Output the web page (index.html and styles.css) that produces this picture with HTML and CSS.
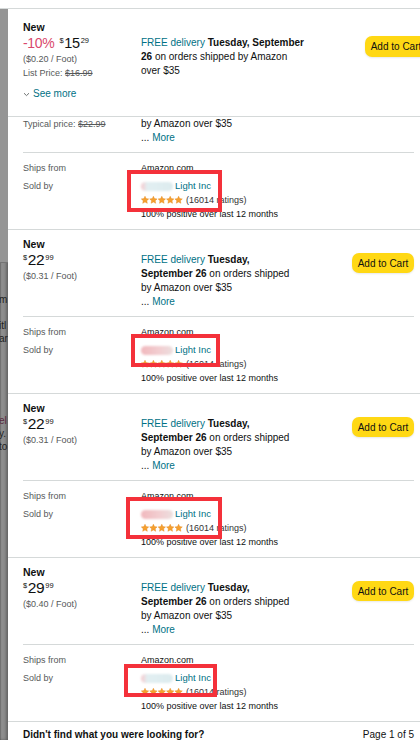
FILE: index.html
```html
<!DOCTYPE html>
<html lang="en">
<head>
  <meta charset="UTF-8" />
  <meta name="viewport" content="width=device-width, initial-scale=1.0" />
  <title>Other sellers</title>
  <link rel="stylesheet" href="styles.css">
</head>
<body>
  <div class="topbar"></div>

  <div class="layout">
    <!-- page behind the side sheet -->
    <div class="backdrop">
      <div class="bd-top"></div>
      <p class="bd-text bd-first">m<br><br>itl<br>ar</p>
      <p class="bd-text bd-second"><span class="bd-link">el</span><br>y.<br>to</p>
    </div>

    <div class="panel">
      <!-- pinned offer -->
      <section class="pinned">
        <div class="col-price">
          <div class="cond">New</div>
          <div class="price">
            <span class="saving">-10%</span>
            <span class="sym">$</span><span class="whole whole-sm">15</span><span class="sym">29</span>
          </div>
          <div class="unit">($0.20 / Foot)</div>
          <div class="unit">List Price: <s>$16.99</s></div>
          <div class="see-more">
            <svg width="7" height="5" viewBox="0 0 7 5"><path d="M1 1.2 L3.5 3.6 L6 1.2" fill="none" stroke="#6f7373" stroke-width="1"/></svg>
            <span class="link">See more</span>
          </div>
        </div>
        <div class="col-ship pinned-ship">
          <span class="link">FREE delivery</span> <b>Tuesday, September</b><br>
          <b>26</b> on orders shipped by Amazon<br>
          over $35
        </div>
        <div class="col-btn">
          <button class="cart pinned-cart">Add to Cart</button>
        </div>
      </section>

      <div class="scroll">
        <div class="list">
          <!-- offer partly scrolled out of view -->
          <section class="offer offer-cut">
            <div class="offer-top">
              <div class="col-price">
                <div class="unit">($0.26 / Foot)</div>
                <div class="unit">Typical price: <s>$22.99</s></div>
              </div>
              <div class="col-ship">
                <b>September 26</b> on orders shipped<br>
                by Amazon over $35<br>
                ... <span class="link">More</span>
              </div>
              <div class="col-btn"></div>
            </div>
            <div class="seller">
              <div class="lbl">Ships from</div>
              <div class="val">Amazon.com</div>
              <div class="lbl">Sold by</div>
              <div class="val seller-info">
                <div class="name"><span class="blur blur-cyan"></span><span class="link">Light Inc</span></div>
                <div class="rating">
                  <svg class="stars" width="42" height="8" viewBox="0 0 42 8"><use href="#s" x="0"/><use href="#s" x="8.4"/><use href="#s" x="16.8"/><use href="#s" x="25.2"/><use href="#s" x="33.6"/></svg>
                  (16014 ratings)
                </div>
                <div>100% positive over last 12 months</div>
                <div class="mark mark-1"></div>
              </div>
            </div>
          </section>

          <section class="offer">
            <div class="offer-top">
              <div class="col-price">
                <div class="cond">New</div>
                <div class="price"><span class="sym">$</span><span class="whole">22</span><span class="sym">99</span></div>
                <div class="unit">($0.31 / Foot)</div>
              </div>
              <div class="col-ship">
                <span class="link">FREE delivery</span> <b>Tuesday,</b><br>
                <b>September 26</b> on orders shipped<br>
                by Amazon over $35<br>
                ... <span class="link">More</span>
              </div>
              <div class="col-btn"><button class="cart">Add to Cart</button></div>
            </div>
            <div class="seller">
              <div class="lbl">Ships from</div>
              <div class="val">Amazon.com</div>
              <div class="lbl">Sold by</div>
              <div class="val seller-info">
                <div class="name"><span class="blur blur-pink"></span><span class="link">Light Inc</span></div>
                <div class="rating">
                  <svg class="stars" width="42" height="8" viewBox="0 0 42 8"><use href="#s" x="0"/><use href="#s" x="8.4"/><use href="#s" x="16.8"/><use href="#s" x="25.2"/><use href="#s" x="33.6"/></svg>
                  (16014 ratings)
                </div>
                <div>100% positive over last 12 months</div>
                <div class="mark mark-2"></div>
              </div>
            </div>
          </section>

          <section class="offer">
            <div class="offer-top">
              <div class="col-price">
                <div class="cond">New</div>
                <div class="price"><span class="sym">$</span><span class="whole">22</span><span class="sym">99</span></div>
                <div class="unit">($0.31 / Foot)</div>
              </div>
              <div class="col-ship">
                <span class="link">FREE delivery</span> <b>Tuesday,</b><br>
                <b>September 26</b> on orders shipped<br>
                by Amazon over $35<br>
                ... <span class="link">More</span>
              </div>
              <div class="col-btn"><button class="cart">Add to Cart</button></div>
            </div>
            <div class="seller">
              <div class="lbl">Ships from</div>
              <div class="val">Amazon.com</div>
              <div class="lbl">Sold by</div>
              <div class="val seller-info">
                <div class="name"><span class="blur blur-pink"></span><span class="link">Light Inc</span></div>
                <div class="rating">
                  <svg class="stars" width="42" height="8" viewBox="0 0 42 8"><use href="#s" x="0"/><use href="#s" x="8.4"/><use href="#s" x="16.8"/><use href="#s" x="25.2"/><use href="#s" x="33.6"/></svg>
                  (16014 ratings)
                </div>
                <div>100% positive over last 12 months</div>
                <div class="mark mark-3"></div>
              </div>
            </div>
          </section>

          <section class="offer">
            <div class="offer-top">
              <div class="col-price">
                <div class="cond">New</div>
                <div class="price"><span class="sym">$</span><span class="whole">29</span><span class="sym">99</span></div>
                <div class="unit">($0.40 / Foot)</div>
              </div>
              <div class="col-ship">
                <span class="link">FREE delivery</span> <b>Tuesday,</b><br>
                <b>September 26</b> on orders shipped<br>
                by Amazon over $35<br>
                ... <span class="link">More</span>
              </div>
              <div class="col-btn"><button class="cart">Add to Cart</button></div>
            </div>
            <div class="seller">
              <div class="lbl">Ships from</div>
              <div class="val">Amazon.com</div>
              <div class="lbl">Sold by</div>
              <div class="val seller-info">
                <div class="name"><span class="blur blur-cyan"></span><span class="link">Light Inc</span></div>
                <div class="rating">
                  <svg class="stars" width="42" height="8" viewBox="0 0 42 8"><use href="#s" x="0"/><use href="#s" x="8.4"/><use href="#s" x="16.8"/><use href="#s" x="25.2"/><use href="#s" x="33.6"/></svg>
                  (16014 ratings)
                </div>
                <div>100% positive over last 12 months</div>
                <div class="mark mark-4"></div>
              </div>
            </div>
          </section>

          <div class="list-foot">
            <b>Didn't find what you were looking for?</b>
            <span>Page 1 of 5</span>
          </div>
        </div>
      </div>
    </div>
  </div>

  <svg width="0" height="0" class="defs">
    <defs>
      <path id="s" d="M4 0.2 L5.1 2.6 L7.7 2.9 L5.8 4.7 L6.3 7.3 L4 6 L1.7 7.3 L2.2 4.7 L0.3 2.9 L2.9 2.6 Z" fill="#f5a030" stroke="#e4861a" stroke-width="0.4"/>
    </defs>
  </svg>
</body>
</html>
```

FILE: styles.css
```css
body { margin: 0; font-family: "Liberation Sans", Arial, sans-serif; font-size: 10px; color: #0f1111; background: #fff; }
.defs { position: absolute; }

.topbar { height: 8px; border-bottom: 1px solid #d5d9d9; }
.layout { display: flex; height: 731px; }

.backdrop { width: 8px; flex: none; background: #8e8e8e; overflow: hidden; box-shadow: inset -2px 0 3px rgba(0,0,0,0.3), inset 1px 0 1px rgba(0,0,0,0.2); }
.bd-top { height: 253px; border-bottom: 1px solid #747474; background: #959595; }
.bd-text { margin: 0; font-size: 10px; line-height: 13px; color: #222; white-space: nowrap; margin-left: -1px; }
.bd-first { margin-top: 30px; }
.bd-second { margin-top: 69px; }
.bd-link { color: #5a2a40; }

.panel { flex: 1; min-width: 0; overflow: hidden; display: flex; flex-direction: column; }

.link { color: #007185; }
b { font-weight: bold; }

.pinned { flex: none; height: 108px; box-sizing: border-box; border-bottom: 1px solid #d5d9d9; padding: 11px 0 0 15px; display: grid; grid-template-columns: 118px 224px 62px; align-items: start; }
.pinned-ship { line-height: 14.5px; }

.cond { font-weight: bold; font-size: 10.5px; line-height: 14px; }
.price { display: flex; align-items: flex-start; line-height: 18px; height: 18px; }
.sym { font-size: 7.5px; line-height: 13px; }
.whole { font-size: 15.5px; letter-spacing: -0.3px; margin: 0 1px 0 0.5px; }
.whole-sm { font-size: 14.5px; }
.saving { color: #d9486d; font-size: 14px; margin-right: 5px; letter-spacing: -0.3px; }
.unit { font-size: 9px; line-height: 14px; color: #565959; }
.unit s { color: #565959; }
.see-more { margin-top: 7px; line-height: 14px; display: flex; align-items: center; gap: 3px; font-size: 10px; }

.col-ship { margin-top: 16px; line-height: 14px; font-size: 10px; white-space: nowrap; }
.col-btn { margin-top: 16px; }
.cart { width: 62px; height: 20px; padding: 0; border: none; border-radius: 7px; background: #ffd814; color: #0f1111; font-family: inherit; font-size: 10px; box-shadow: 0 1px 2px rgba(213,217,217,0.6); }
.pinned-cart { height: 21px; }

.scroll { flex: 1; overflow: hidden; }
.list { margin-top: -14px; }

.offer { border-top: 1px solid #d5d9d9; padding: 0 6px 0 15px; }
.offer-top { display: grid; grid-template-columns: 118px 1fr 62px; padding: 7px 0; align-items: start; }
.offer-cut { border-top: none; }
.offer-cut .offer-top { padding-top: 0; }
.offer-cut .col-ship, .offer-cut .col-btn { margin-top: 0; }

.seller { border-top: 1px solid #d5d9d9; padding: 8px 0; display: grid; grid-template-columns: 118px 1fr; row-gap: 4px; font-size: 9px; line-height: 14px; }
.lbl { color: #565959; }
.seller-info { position: relative; }
.name { display: flex; align-items: center; font-size: 9.5px; }
.blur { display: inline-block; width: 32px; height: 9px; margin-right: 2px; border-radius: 5px; filter: blur(1.2px); }
.blur-cyan { background: linear-gradient(90deg, #f6c8cc 0, #e2eff2 20%, #dcebee 100%); }
.blur-pink { background: linear-gradient(90deg, #f1b8bd 0, #f2cfd2 60%, #ecdede 100%); }
.rating { display: flex; align-items: center; gap: 3px; color: #333; }
.stars { display: block; }

.mark { position: absolute; border: 4px solid #f4313a; box-sizing: border-box; }
.mark-1 { left: -14px; top: -9px; width: 95px; height: 42px; }
.mark-2 { left: -10px; top: -9px; width: 89px; height: 33px; }
.mark-3 { left: -15px; top: -10px; width: 96px; height: 42px; }
.mark-4 { left: -17px; top: -7px; width: 93px; height: 33px; }

.list-foot { border-top: 1px solid #d5d9d9; padding: 6px 6px 0 15px; display: flex; justify-content: space-between; font-size: 10px; line-height: 14px; }
```
